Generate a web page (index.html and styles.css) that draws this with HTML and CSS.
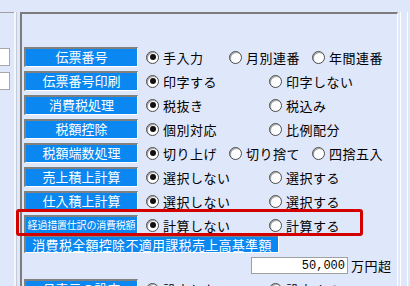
FILE: index.html
```html
<!DOCTYPE html>
<html lang="ja">
<head>
    <meta charset="UTF-8">
    <meta name="viewport" content="width=device-width, initial-scale=1.0">
    <title>伝票設定</title>
    <link rel="stylesheet" href="styles.css">
</head>
<body>

    <!-- 左側の入力欄 -->
    <div class="side-left">
        <input class="side-input" type="text">
        <input class="side-input" type="text">
    </div>
    <div class="splitter"></div>

    <!-- 設定パネル -->
    <div class="panel">
        <div class="row">
            <div class="label">伝票番号</div>
            <span class="opt opt-narrow"><i class="radio on"></i>手入力</span>
            <span class="opt opt-narrow"><i class="radio"></i>月別連番</span>
            <span class="opt"><i class="radio"></i>年間連番</span>
        </div>
        <div class="row">
            <div class="label">伝票番号印刷</div>
            <span class="opt opt-wide"><i class="radio on"></i>印字する</span>
            <span class="opt"><i class="radio"></i>印字しない</span>
        </div>
        <div class="row">
            <div class="label">消費税処理</div>
            <span class="opt opt-wide"><i class="radio on"></i>税抜き</span>
            <span class="opt"><i class="radio"></i>税込み</span>
        </div>
        <div class="row">
            <div class="label">税額控除</div>
            <span class="opt opt-wide"><i class="radio on"></i>個別対応</span>
            <span class="opt"><i class="radio"></i>比例配分</span>
        </div>
        <div class="row">
            <div class="label">税額端数処理</div>
            <span class="opt opt-narrow"><i class="radio on"></i>切り上げ</span>
            <span class="opt opt-narrow"><i class="radio"></i>切り捨て</span>
            <span class="opt"><i class="radio"></i>四捨五入</span>
        </div>
        <div class="row">
            <div class="label">売上積上計算</div>
            <span class="opt opt-wide"><i class="radio on"></i>選択しない</span>
            <span class="opt"><i class="radio"></i>選択する</span>
        </div>
        <div class="row">
            <div class="label">仕入積上計算</div>
            <span class="opt opt-wide"><i class="radio on"></i>選択しない</span>
            <span class="opt"><i class="radio"></i>選択する</span>
        </div>
        <div class="row row-mark">
            <div class="label label-small">経過措置仕訳の消費税額</div>
            <span class="opt opt-wide"><i class="radio on"></i>計算しない</span>
            <span class="opt"><i class="radio"></i>計算する</span>
        </div>
        <div class="row row-long">
            <div class="label label-long">消費税全額控除不適用課税売上高基準額</div>
        </div>
        <div class="row row-amount">
            <input class="amount" type="text" value="50,000">
            <span class="unit">万円超</span>
        </div>
        <div class="row row-last">
            <div class="label">月表示の設定</div>
            <span class="opt opt-wide"><i class="radio on"></i>設定しない</span>
            <span class="opt"><i class="radio"></i>設定する</span>
        </div>
    </div>

    <div class="side-right"></div>

</body>
</html>
```

FILE: styles.css
```css
body {
    margin: 0;
    padding: 12px 0 0 0;
    width: 410px;
    height: 286px;
    box-sizing: border-box;
    overflow: hidden;
    display: flex;
    background: #dfe7fb;
    font-family: "Noto Sans CJK JP", "Noto Sans", sans-serif;
    font-size: 13px;
    color: #000;
}

/* 左側 */
.side-left {
    width: 14px;
    border-top: 1px solid #a0a0a0;
    padding-top: 35px;
    display: flex;
    flex-direction: column;
    gap: 6px;
}
.side-input {
    width: 10px;
    height: 18px;
    box-sizing: border-box;
    margin: 0;
    padding: 0;
    border: 1px solid #a8a8a8;
    border-left: none;
    background: #fff;
}
.splitter {
    width: 2px;
    margin-right: 3px;
    background: #f3f6fd;
    border-right: 1px solid #c4cad8;
}

/* 設定パネル */
.panel {
    width: 378px;
    box-sizing: border-box;
    border-top: 2px solid #7c7c7c;
    border-left: 2px solid #7c7c7c;
    border-right: 1px solid #fff;
    padding: 33px 0 0 2px;
}
.side-right {
    width: 6px;
    margin-left: 2px;
    border-left: 1px solid #fff;
    border-right: 1px solid #fff;
}
.row {
    display: flex;
    align-items: center;
    height: 20px;
    margin-bottom: 4px;
    white-space: nowrap;
}
.label {
    width: 114px;
    height: 20px;
    box-sizing: border-box;
    border-top: 2px solid #808080;
    border-left: 2px solid #808080;
    border-right: 1px solid #fff;
    border-bottom: 1px solid #fff;
    background: #0a87f0;
    color: #fff;
    text-align: center;
    line-height: 16px;
    margin-right: 8px;
    flex-shrink: 0;
}
.label-small { font-size: 10px; letter-spacing: -0.2px; }
.label-long { width: 255px; letter-spacing: 0.3px; }

.opt {
    display: inline-flex;
    align-items: center;
    letter-spacing: 0.5px;
}
.opt-narrow { width: 83px; }
.opt-wide { width: 123px; }
.radio {
    width: 13px;
    height: 13px;
    box-sizing: border-box;
    border: 1px solid #4a4a4a;
    border-radius: 50%;
    background: #fff;
    margin-right: 4px;
    box-shadow: inset 1px 1px 0 #a0a0a0;
    display: inline-flex;
    align-items: center;
    justify-content: center;
}
.radio.on::before {
    content: "";
    width: 6px;
    height: 6px;
    border-radius: 50%;
    background: #111;
}

/* 赤枠 */
.row-mark { position: relative; margin-bottom: 0; }
.row-mark::after {
    content: "";
    position: absolute;
    left: -8px;
    top: -6px;
    width: 347px;
    height: 27px;
    box-sizing: border-box;
    border: 3px solid #d40000;
    border-radius: 3px;
}
.row-long { height: 18px; }
.row-long .label { height: 18px; line-height: 15px; }

.row-amount { height: 17px; margin-bottom: 5px; }
.amount {
    margin: 0 3px 0 227px;
    width: 97px;
    height: 17px;
    box-sizing: border-box;
    border: 1px solid #a0a0a0;
    padding: 0 2px 0 0;
    text-align: right;
    font-family: "Liberation Mono", monospace;
    font-size: 12px;
    background: #fff;
}
.unit { letter-spacing: 0.5px; }
```
